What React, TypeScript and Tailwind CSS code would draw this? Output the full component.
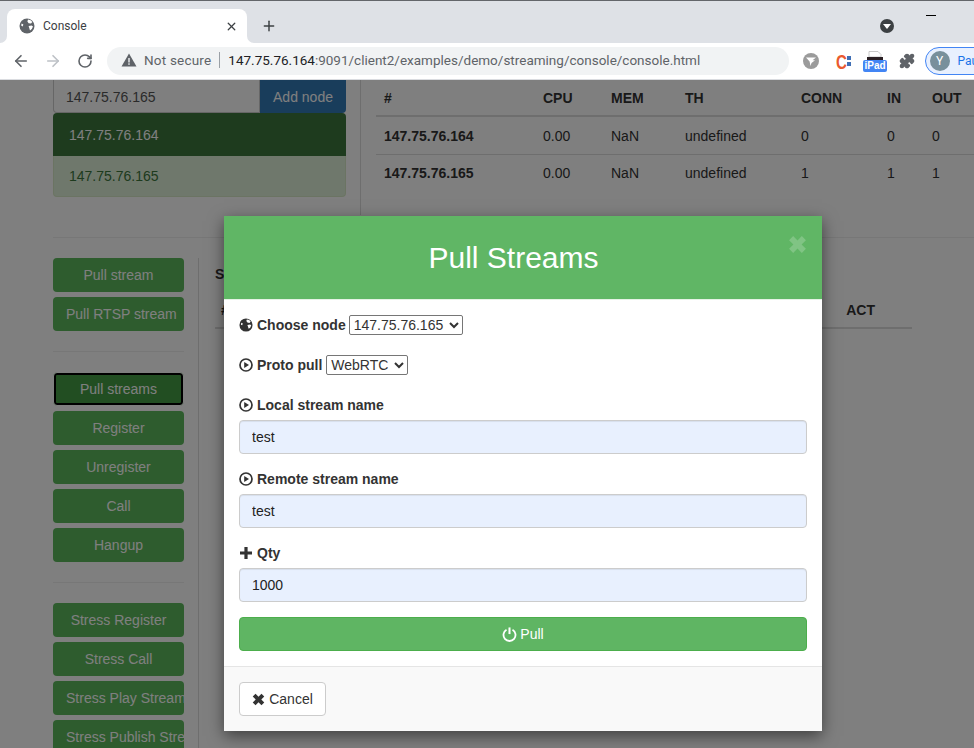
import { ReactNode } from "react";
import { ArrowLeft, ArrowRight, Plus, Puzzle, RotateCw, X } from "lucide-react";

const sideGroups = [
  ["Pull stream", "Pull RTSP stream"],
  ["Pull streams", "Register", "Unregister", "Call", "Hangup"],
  ["Stress Register", "Stress Call", "Stress Play Stream", "Stress Publish Stream"],
];

const nodes = [
  { ip: "147.75.76.164", conn: "0", inn: "0", out: "0", pad: "pt-[2px]" },
  { ip: "147.75.76.165", conn: "1", inn: "1", out: "1", pad: "pb-[2px]" },
];

function GlobeIcon({ className }: { className: string }) {
  return (
    <svg viewBox="0 0 16 16" className={className}>
      <circle cx="8" cy="8" r="7.5" fill="currentColor" />
      <path d="M9 1.6 11.6 2.2 13.4 4 12 5.6 9.6 5.2 8.4 3.4Z" fill="#fff" />
      <path d="M9.6 8 12.6 7.4 14 8.4 12.8 11 11 12.4 10.4 10.4Z" fill="#fff" />
      <path d="M2.6 5.4 4.4 6.4 3.6 8.4 2.2 7.6Z" fill="#fff" />
    </svg>
  );
}

function PlayCircle() {
  return (
    <svg viewBox="0 0 14 14" className="w-[14px] h-[14px] text-[#333] shrink-0">
      <circle cx="7" cy="7" r="6" fill="none" stroke="currentColor" strokeWidth="1.7" />
      <path d="M5.2 3.9 10 7 5.2 10.1Z" fill="currentColor" />
    </svg>
  );
}

function PlusIcon() {
  return (
    <svg viewBox="0 0 14 14" className="w-[14px] h-[14px] text-[#333] shrink-0">
      <path d="M5.4 1H8.6V5.4H13V8.6H8.6V13H5.4V8.6H1V5.4H5.4Z" fill="currentColor" />
    </svg>
  );
}

function RemoveIcon({ className }: { className: string }) {
  return (
    <svg viewBox="0 0 14 14" className={className}>
      <path d="M.8 3.8 3.8.8 7 4 10.2.8 13.2 3.8 10 7 13.2 10.2 10.2 13.2 7 10 3.8 13.2.8 10.2 4 7Z" fill="currentColor" />
    </svg>
  );
}

function Label({ icon, children }: { icon: ReactNode; children: ReactNode }) {
  return (
    <span className="flex items-center gap-[4px] font-bold text-[#333] text-[14px] leading-5">
      {icon}
      {children}
    </span>
  );
}

function Field({ icon, label, value }: { icon: ReactNode; label: string; value: string }) {
  return (
    <div className="mb-[15px]">
      <div className="mb-[5px]">
        <Label icon={icon}>{label}</Label>
      </div>
      <input
        readOnly
        value={value}
        className="block w-full h-[34px] px-3 rounded-[4px] border border-[#ccc] bg-[#e8f0fe] text-[14px] text-[#222] shadow-[inset_0_1px_1px_rgba(0,0,0,0.075)]"
      />
    </div>
  );
}

function BrowserChrome() {
  return (
    <div className="h-[80px] shrink-0 flex flex-col font-['Roboto',sans-serif]">
      <div className="h-[43px] bg-[#dee1e6] border-t border-[#63666a] flex items-end pl-[7px] relative">
        <div className="w-[240px] h-[34px] bg-white rounded-t-[8px] flex items-center pl-[12px] pr-[9px] relative">
          <svg viewBox="0 0 8 8" className="absolute -left-[7px] bottom-0 w-[7px] h-[7px]">
            <path d="M8 0V8H0A8 8 0 0 0 8 0Z" fill="#fff" />
          </svg>
          <GlobeIcon className="w-[16px] h-[16px] text-[#5f6368] mr-[8px]" />
          <span className="text-[12px] text-[#3c4043] flex-1">Console</span>
          <X className="w-[13px] h-[13px] text-[#3c4043]" strokeWidth={2.4} />
          <svg viewBox="0 0 8 8" className="absolute -right-[7px] bottom-0 w-[7px] h-[7px]">
            <path d="M0 0V8H8A8 8 0 0 1 0 0Z" fill="#fff" />
          </svg>
        </div>
        <Plus className="w-[16px] h-[16px] ml-[14px] mb-[9px] text-[#3c4043]" strokeWidth={2.2} />
        <div className="absolute left-[880px] top-[18px] w-[14px] h-[14px] rounded-full bg-[#3c4043] flex items-center justify-center">
          <div className="w-0 h-0 border-x-[4px] border-x-transparent border-t-[5px] border-t-white mt-[1px]" />
        </div>
        <div className="absolute left-[926px] top-[14px] w-[10px] h-px bg-black" />
      </div>
      <div className="h-[37px] bg-white border-b border-[#dadce0] flex items-center pl-[12px] overflow-hidden">
        <ArrowLeft className="w-[18px] h-[18px] text-[#5f6368] shrink-0" strokeWidth={2.2} />
        <ArrowRight className="w-[18px] h-[18px] ml-[14px] text-[#bdc1c6] shrink-0" strokeWidth={2.2} />
        <RotateCw className="w-[16px] h-[16px] ml-[15px] text-[#5f6368] shrink-0" strokeWidth={2.4} />
        <div className="w-[682px] h-[28px] ml-[14px] rounded-full bg-[#f1f3f4] flex items-center pl-[14px] pb-[2px] text-[13.5px] shrink-0">
          <svg viewBox="0 0 16 16" className="w-[16px] h-[16px] text-[#5f6368] shrink-0">
            <path d="M8 1.5 15.5 14.5H.5Z" fill="currentColor" />
            <rect x="7.3" y="6" width="1.4" height="4.5" fill="#f1f3f4" />
            <rect x="7.3" y="11.3" width="1.4" height="1.5" fill="#f1f3f4" />
          </svg>
          <span className="ml-[7px] text-[#5f6368] tracking-[0.2px]">Not secure</span>
          <span className="w-px h-[16px] bg-[#9aa0a6] mx-[8px]" />
          <span className="text-[#202124]">147.75.76.164</span>
          <span className="text-[#5f6368]">:9091/client2/examples/demo/streaming/console/console.html</span>
        </div>
        <svg viewBox="0 0 16 16" className="w-[16px] h-[16px] ml-[14px] shrink-0">
          <circle cx="8" cy="8" r="8" fill="#9b9b9b" />
          <path d="M3 4.5H13L9.5 7.2H12L8.5 10 7.5 13 6.6 8.6Z" fill="#fff" />
        </svg>
        <span className="ml-[17px] w-[11px] shrink-0 flex justify-center text-[21px] leading-none font-bold text-[#ea5a2e] font-['Liberation_Sans',sans-serif] scale-x-[0.72]">C</span>
        <div className="flex flex-col gap-[2px] shrink-0">
          <span className="w-[4px] h-[4px] bg-[#3f6fb5]" />
          <span className="w-[4px] h-[4px] bg-[#3f6fb5]" />
        </div>
        <div className="ml-[12px] w-[24px] flex flex-col items-center shrink-0">
          <svg viewBox="0 0 18 9" className="w-[18px] h-[9px]">
            <path d="M3 6V.5H12L15 3.5V6Z" fill="#fff" stroke="#bbb" strokeWidth="0.8" />
            <rect x="1" y="6" width="16" height="3" fill="#2b2024" />
          </svg>
          <div className="w-[24px] h-[12px] bg-[#4285f4] rounded-[2px] text-white text-[10px] leading-[12px] font-bold text-center font-['Liberation_Sans',sans-serif]">iPad</div>
        </div>
        <Puzzle className="w-[16px] h-[16px] ml-[12px] text-[#5f6368] fill-[#5f6368] shrink-0" />
        <div className="ml-[10px] w-[70px] h-[28px] rounded-full border-[1.5px] border-[#4285f4] bg-[#e8f0fe] flex items-center pl-[3.5px] shrink-0">
          <div className="w-[20px] h-[20px] rounded-full bg-[#78909c] text-white text-[12px] flex items-center justify-center">Y</div>
          <span className="ml-[8px] text-[12px] text-[#1a73e8]">Paul</span>
        </div>
      </div>
    </div>
  );
}

function SideButton({ label }: { label: string }) {
  const focused = label === "Pull streams";
  return (
    <div
      className={
        focused
          ? "h-[34px] px-3 rounded-[4px] text-center leading-[32px] overflow-hidden whitespace-nowrap text-white bg-[#449d44] border border-white shadow-[inset_0_0_0_2px_#000]"
          : "h-[34px] px-[13px] rounded-[4px] text-center leading-[34px] overflow-hidden whitespace-nowrap text-white bg-[#5cb85c]"
      }
    >
      {label}
    </div>
  );
}

function Page() {
  return (
    <div className="flex-1 overflow-hidden bg-white text-[14px] text-[#333]">
      <div className="flex h-[135px]">
        <div className="w-[293px] shrink-0 ml-[53px] mr-[14px]">
          <div className="flex h-[33px]">
            <div className="flex-1 border border-[#ccc] border-t-0 rounded-bl-[4px] pl-[12px] leading-[35px] text-[#555]">147.75.76.165</div>
            <div className="w-[86px] bg-[#337ab7] text-white text-center leading-[35px] rounded-br-[4px]">Add node</div>
          </div>
          <div className="h-[43px] pl-[16px] leading-[44px] bg-[#3c763d] text-white rounded-t-[4px]">147.75.76.164</div>
          <div className="h-[41px] pl-[15px] leading-[41px] bg-[#dff0d8] text-[#3c763d] rounded-b-[4px] border border-[#d6e9c6] border-t-0">147.75.76.165</div>
        </div>
        <div className="flex-1 border-l border-[#ddd] pl-[15px] overflow-hidden">
          <div className="grid grid-cols-[159px_68px_74px_116px_86px_45px_50px] h-[37px] pt-[2px] border-b-2 border-[#ddd] font-bold items-center pl-[8px] w-[700px]">
            {["#", "CPU", "MEM", "TH", "CONN", "IN", "OUT"].map((h) => (
              <span key={h}>{h}</span>
            ))}
          </div>
          {nodes.map((n) => (
            <div key={n.ip} className={`grid grid-cols-[159px_68px_74px_116px_86px_45px_50px] h-[38px] border-b border-[#ddd] last:border-b-0 items-center pl-[8px] w-[700px] ${n.pad}`}>
              <b>{n.ip}</b>
              <span>0.00</span>
              <span>NaN</span>
              <span>undefined</span>
              <span>{n.conn}</span>
              <span>{n.inn}</span>
              <span>{n.out}</span>
            </div>
          ))}
        </div>
      </div>
      <div className="ml-[53px] mt-[22px] border-t border-[#eee]" />
      <div className="flex mt-[20px] ml-[53px]">
        <div className="w-[131px] shrink-0">
          {sideGroups.map((group, i) => (
            <div key={i}>
              {i > 0 && <div className="border-t border-[#eee] mt-[20px] mb-[20px]" />}
              <div className="flex flex-col gap-[5px]">
                {group.map((b) => (
                  <SideButton key={b} label={b} />
                ))}
              </div>
            </div>
          ))}
        </div>
        <div className="ml-[14px] pl-[16px] border-l border-[#ddd] flex-1 h-[520px]">
          <div className="font-bold leading-[20px] mt-[6px]">S</div>
          <div className="w-[697px] h-[37px] pt-[2px] mt-[8px] border-b-2 border-[#ddd] font-bold flex items-center justify-between pl-[6px] pr-[37px]">
            <span>#</span>
            <span>ACT</span>
          </div>
        </div>
      </div>
    </div>
  );
}

function PullModal() {
  return (
    <div className="absolute inset-x-0 top-[80px] bottom-0 bg-black/50 font-['Liberation_Sans',sans-serif]">
      <div className="absolute left-[224px] top-[136px] w-[598px] bg-white text-[14px] shadow-[0_5px_15px_rgba(0,0,0,0.5)]">
        <div className="h-[84px] bg-[#60b665] border-b border-[#e5f2e5] flex items-center justify-center pr-[19px] relative">
          <h4 className="text-[30px] text-white leading-none">Pull Streams</h4>
          <RemoveIcon className="absolute right-[15px] top-[19px] w-[19px] h-[19px] text-white opacity-20" />
        </div>
        <div className="p-[15px]">
          <div className="flex items-center gap-[3px] h-[20px] mb-[20px]">
            <Label icon={<GlobeIcon className="w-[14px] h-[14px] text-[#333]" />}>Choose node</Label>
            <select defaultValue="147.75.76.165" className="h-[20px] w-[114px] border border-[#767676] rounded-[2px] bg-white text-[#333] text-[14px]">
              <option>147.75.76.165</option>
            </select>
          </div>
          <div className="flex items-center gap-[4px] h-[20px] mb-[20px]">
            <Label icon={<PlayCircle />}>Proto pull</Label>
            <select defaultValue="WebRTC" className="h-[20px] w-[82px] border border-[#767676] rounded-[2px] bg-white text-[#333] text-[14px]">
              <option>WebRTC</option>
            </select>
          </div>
          <Field icon={<PlayCircle />} label="Local stream name" value="test" />
          <Field icon={<PlayCircle />} label="Remote stream name" value="test" />
          <Field icon={<PlusIcon />} label="Qty" value="1000" />
          <div className="h-[34px] rounded-[4px] bg-[#5fb563] border border-[#4cae4c] text-white flex items-center justify-center gap-[3px]">
            <svg viewBox="0 0 14 14" className="w-[15px] h-[15px] shrink-0">
              <path d="M4.2 2.6A5.6 5.6 0 1 0 9.8 2.6" fill="none" stroke="currentColor" strokeWidth="1.7" />
              <path d="M7 .4V6.6" stroke="currentColor" strokeWidth="1.9" />
            </svg>
            Pull
          </div>
        </div>
        <div className="bg-[#f9f9f9] border-t border-[#e5e5e5] p-[15px]">
          <div className="w-[87px] h-[34px] rounded-[4px] bg-white border border-[#ccc] text-[#333] flex items-center justify-center gap-[4px]">
            <RemoveIcon className="w-[13px] h-[13px] shrink-0" />
            Cancel
          </div>
        </div>
      </div>
    </div>
  );
}

export default function App() {
  return (
    <div className="relative w-[974px] h-[748px] overflow-hidden flex flex-col font-['Liberation_Sans',sans-serif]">
      <BrowserChrome />
      <Page />
      <PullModal />
    </div>
  );
}
